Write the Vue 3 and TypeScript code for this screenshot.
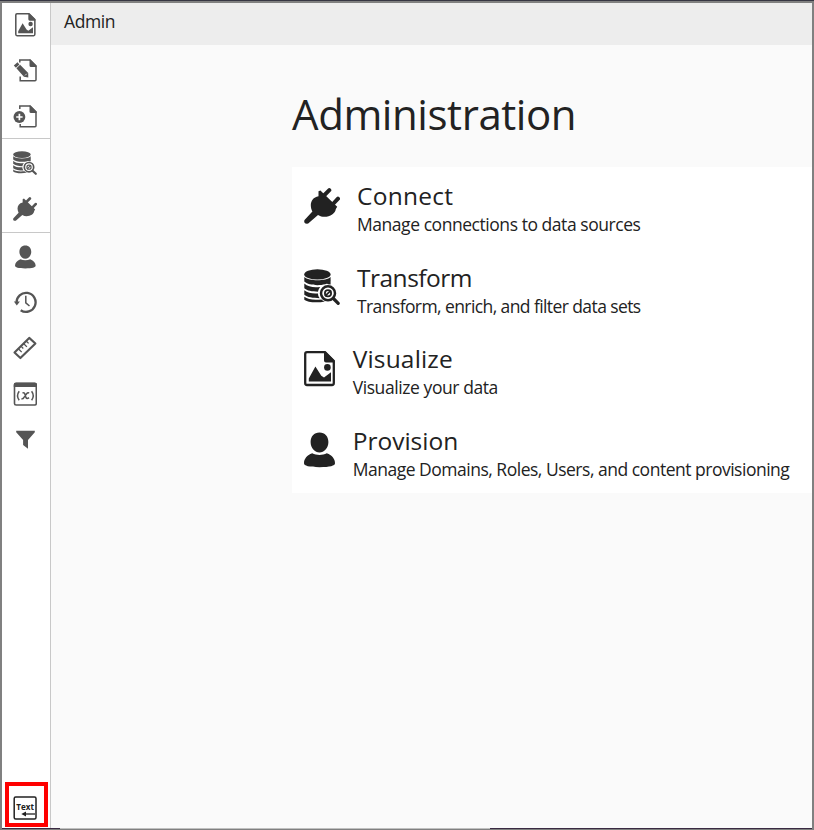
<script setup lang="ts">
import { h, type FunctionalComponent } from 'vue'

interface Glyph {
  w: number
  h: number
  body: string
}

const glyphs: Record<string, Glyph> = {
  plug: {
    w: 36, h: 36,
    body: '<path d="M14.5 3.2 16.4 2.4 33.2 18.8 31.8 21C31.5 27 21 31.5 14 27L4.2 35.6Q1.5 36.2 .4 34.4-.2 32.6 1 31.4L8.4 23.6C5 17 7 9.4 14.5 8.2Z"/><path d="M19.5 8 25.3 2.2M29 16 34 10.6" fill="none" stroke="currentColor" stroke-width="4" stroke-linecap="round"/>',
  },
  data: {
    w: 36, h: 36,
    body: '<ellipse cx="13.4" cy="5.4" rx="13.2" ry="5.2"/><path d="M.3 8C5 12.4 22 12.4 26.6 8V12.6C22 17.4 5 17.4.3 12.6ZM.3 14.6C4 18.2 10 18.7 16.2 18 14.9 19.8 14.2 21.4 14 22.7 8 22.7 3 21.7.3 19.3ZM.3 21.3C4 24.4 9 24.7 14 24.4 14 26.5 14.8 28 15.7 29.2 9 29.2 3 28.2 .3 25.8ZM.3 27.8C4 30.7 10 31 17.4 30.4 18.5 31.6 20 32 21 32.4 13 34.2 3 33.2 .3 30.7ZM22 13.9Q25 13 26.6 11.7V15.5L24 15.2Z"/><circle cx="24" cy="24.3" r="7" fill="none" stroke="currentColor" stroke-width="2.5"/><circle cx="24" cy="24.3" r="3.1" fill="none" stroke="currentColor" stroke-width="1.8"/><path d="M21 27.2 27 21.3" stroke="currentColor" stroke-width="1.7"/><path d="M29.4 29.5 34.2 34.3" stroke="currentColor" stroke-width="3.2" stroke-linecap="round"/>',
  },
  image: {
    w: 31, h: 36,
    body: '<path d="M3 1.2H21L29.8 10V32Q29.8 34 28 34H3Q1.2 34 1.2 32V3Q1.2 1.2 3 1.2Z" fill="none" stroke="currentColor" stroke-width="2.3"/><path d="M20 1H22L30.5 9.5V11.5H22Q20 11.5 20 9.5ZM4.8 30.5V27.5L11.4 15.5 17.3 24.8 20 26.5 27 21.3V30.5Z"/><circle cx="23.4" cy="16.4" r="3.3"/>',
  },
  user: {
    w: 31, h: 36,
    body: '<path d="M15.5 .6C10 .6 6.6 4.6 6.6 10.1 6.6 16.1 11 20.6 15.5 20.6S24.4 16.1 24.4 10.1C24.4 4.6 21 .6 15.5 .6ZM8.2 21.3C3 23.3 0 26.8 0 31.3 0 33.8 5 35.2 15.5 35.2S31 33.8 31 31.3C31 26.8 28 23.3 22.8 21.3 18.5 23.6 12.5 23.6 8.2 21.3Z"/>',
  },
  edit: {
    w: 24, h: 24,
    body: '<path d="M6.8 4.6V2H17L23 8V21.7Q23 22.7 22 22.7H7.2V18.5" fill="none" stroke="currentColor" stroke-width="1.5"/><path d="M16.5 1.5H17.5L23.5 7.5V9H18Q16.5 9 16.5 7.5ZM.8 7.6 4.5 4.2 6.4 6.4 2.9 9.7ZM3.4 10.3 7.1 6.8 15.2 15 15.3 19.6 10.9 18.8Z"/><path d="M12.1 17.4 13.8 15.7" fill="none" stroke="#fff" stroke-width=".8"/>',
  },
  add: {
    w: 24, h: 24,
    body: '<path d="M6.8 5V2H17L23 8V21.7Q23 22.7 22 22.7H7.2V20" fill="none" stroke="currentColor" stroke-width="1.5"/><path d="M16.5 1.5H17.5L23.5 7.5V9H18Q16.5 9 16.5 7.5Z"/><circle cx="6.4" cy="13" r="5.9"/><path d="M6.4 9.8V16.2M3.2 13H9.6" stroke="#fff" stroke-width="1.7"/>',
  },
  history: {
    w: 24, h: 24,
    body: '<path d="M3.6 13A9.5 9.5 0 1 1 7.7 20.2" fill="none" stroke="currentColor" stroke-width="2.3"/><path d="M.9 11.4 6.9 11.6 3.8 15.6Z"/><path d="M12.8 5.8V12.8L16.5 16" fill="none" stroke="currentColor" stroke-width="1.5"/>',
  },
  ruler: {
    w: 24, h: 24,
    body: '<path d="M16.2 1.9 22.4 7.5 7.4 22.1 1.5 16.5Z" fill="none" stroke="currentColor" stroke-width="2.1" stroke-linejoin="round"/><path d="M13.4 5.2 15.6 7.4M10.8 7.8 13.9 10.9M8.2 10.4 10.3 12.5M5.6 13 8.7 16.1" stroke="currentColor" stroke-width="1.3"/>',
  },
  formula: {
    w: 24, h: 24,
    body: '<rect x="1.5" y="1.3" width="21.8" height="21.7" rx="1.6" fill="none" stroke="currentColor" stroke-width="1.6"/><path d="M.8 5V2.5Q.8.7 2.7.7H22.2Q24 .7 24 2.5V5Z"/><path d="M6.2 9.3Q2.9 13.8 6.2 18.3M18.6 9.3Q21.9 13.8 18.6 18.3M8.4 16.7Q10 17.3 11 15.4L13.6 11.8Q14.4 10.5 16.2 11M9.5 11.2Q11.4 10 12 12.6L12.9 15.4Q13.9 17.6 16 15.6" fill="none" stroke="currentColor" stroke-width="1.5"/>',
  },
  filter: {
    w: 24, h: 24,
    body: '<path d="M3.2 2.8H21.8V4.3L15 12V20.8L10.1 17V12L3.2 4.3Z"/>',
  },
}

const Icon: FunctionalComponent<{ name: string }> = (props) => {
  const g = glyphs[props.name]
  return h('svg', { viewBox: `0 0 ${g.w} ${g.h}`, fill: 'currentColor', innerHTML: g.body })
}
Icon.props = ['name']

const groups: string[][] = [
  ['image', 'edit', 'add'],
  ['data', 'plug'],
  ['user', 'history', 'ruler', 'formula', 'filter'],
]

const items = [
  { icon: 'plug', title: 'Connect', text: 'Manage connections to data sources' },
  { icon: 'data', title: 'Transform', text: 'Transform, enrich, and filter data sets' },
  { icon: 'image', title: 'Visualize', text: 'Visualize your data' },
  { icon: 'user', title: 'Provision', text: 'Manage Domains, Roles, Users, and content provisioning' },
]
</script>

<template>
  <div class="window">
    <div class="body">
      <nav class="sidebar">
        <div v-for="(group, i) in groups" :key="i" class="group">
          <button v-for="name in group" :key="name" class="tool" :class="name"><Icon :name="name" /></button>
        </div>
        <button class="expand">
          <svg viewBox="0 0 24 24" class="expand-icon">
            <rect x="1.2" y="1" width="21.8" height="22" rx="1.5" fill="none" stroke="#222" stroke-width="1.5" />
            <text x="12.1" y="14" text-anchor="middle" textLength="17.6" lengthAdjust="spacingAndGlyphs">Text</text>
            <path d="M22 18H12" stroke="#222" stroke-width="1.3" />
            <path d="M8.3 18 13 15.5V20.5Z" fill="#222" />
          </svg>
        </button>
      </nav>
      <main class="main">
        <header class="bar">Admin</header>
        <section class="content">
          <h1>Administration</h1>
          <div class="card">
            <div v-for="item in items" :key="item.title" class="row" :class="item.icon">
              <Icon :name="item.icon" class="row-icon" />
              <div>
                <h2>{{ item.title }}</h2>
                <p>{{ item.text }}</p>
              </div>
            </div>
          </div>
        </section>
      </main>
    </div>
    <footer class="edge"><i class="dark left"></i><i class="dark right"></i></footer>
  </div>
</template>

<style>
body {
  margin: 0;
  overflow: hidden;
}
</style>

<style scoped>
* {
  box-sizing: border-box;
}
.window {
  width: 814px;
  height: 830px;
  display: flex;
  flex-direction: column;
  background: #808080;
  border-top: 1px solid #363642;
  padding: 2px 2px 1px;
  font-family: "Open Sans", "Noto Sans", sans-serif;
  color: #222;
}
.body {
  flex: 1;
  min-height: 0;
  display: flex;
}
.sidebar {
  width: 49px;
  flex: none;
  background: #fff;
  border-right: 1px solid #c8c8c8;
  display: flex;
  flex-direction: column;
}
.group {
  display: flex;
  flex-direction: column;
  color: #555;
}
.group + .group {
  border-top: 1px solid #c8c8c8;
}
.group:nth-child(1) {
  height: 135px;
}
.group:nth-child(2) {
  padding-top: 1px;
  height: 94px;
}
button {
  border: 0;
  margin: 0;
  background: none;
  color: inherit;
}
.tool {
  height: 46px;
  flex: none;
  padding: 0 2px 0 0;
  display: flex;
  align-items: center;
  justify-content: center;
}
.group:first-child .tool {
  height: 45.6px;
  padding-bottom: 2px;
}
.tool.image,
.tool.user {
  padding-right: 1px;
}
.tool.user {
  padding-top: 1px;
}
.tool svg {
  height: 24px;
}
.expand {
  margin: auto 0 1px 3px;
  width: 43px;
  height: 45px;
  border: 4px solid #f00;
  padding: 10px 0 0 4px;
  display: flex;
}
.expand-icon {
  width: 24px;
  height: 24px;
}
.expand-icon text {
  font-family: "Open Sans", sans-serif;
  font-size: 9px;
  font-weight: 700;
  fill: #222;
}
.main {
  flex: 1;
  min-width: 0;
  background: #fafafa;
}
.bar {
  height: 42px;
  padding-left: 13px;
  background: #ededed;
  font-size: 17.5px;
  line-height: 37px;
  letter-spacing: -0.4px;
}
.content {
  padding: 39px 0 0 241px;
}
h1 {
  margin: 0;
  height: 83px;
  font-size: 42px;
  line-height: 60px;
  font-weight: 400;
  letter-spacing: -0.43px;
}
.card {
  background: #fff;
  height: 326px;
  padding-left: 12px;
}
.row {
  height: 81.5px;
  display: flex;
  gap: 17px;
}
.row-icon {
  height: 36px;
  flex: none;
  margin-top: 20.5px;
}
h2 {
  margin: 12px 0 0;
  font-size: 24.5px;
  line-height: 34px;
  font-weight: 400;
}
p {
  margin: 0;
  font-size: 17.5px;
  line-height: 23px;
  white-space: nowrap;
}
.plug h2 {
  letter-spacing: 0.25px;
}
.plug p {
  letter-spacing: -0.45px;
}
.data h2 {
  letter-spacing: -0.5px;
}
.data p {
  letter-spacing: -0.59px;
}
.row.image,
.row.user {
  gap: 17.7px;
}
.image h2 {
  letter-spacing: 0.17px;
}
.image p {
  letter-spacing: -0.42px;
}
.user h2 {
  letter-spacing: 0;
}
.user p {
  letter-spacing: -0.49px;
}
.data p,
.user p {
  line-height: 22px;
}
.edge {
  height: 1px;
  display: flex;
  justify-content: space-between;
  background: #c0c0c0;
}
.dark {
  background: #3a2a42;
}
.left {
  width: 58px;
}
.right {
  width: 322px;
}
</style>
